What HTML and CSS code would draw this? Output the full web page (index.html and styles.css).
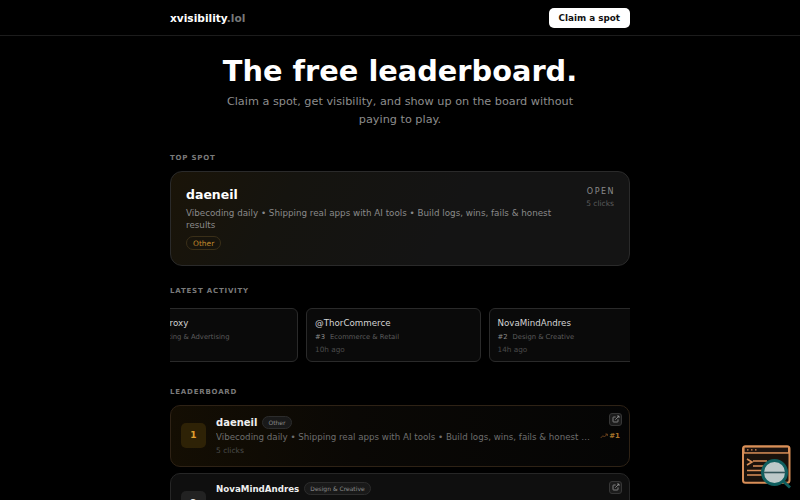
FILE: index.html
```html
<!DOCTYPE html>
<html lang="en">
<head>
    <meta charset="UTF-8">
    <meta name="viewport" content="width=device-width, initial-scale=1.0">
    <title>xvisibility.lol</title>
    <link rel="stylesheet" href="styles.css">
</head>
<body>
    <header class="topbar">
        <div class="wrap topbar-inner">
            <a class="logo" href="#">xvisibility<span class="logo-tld">.lol</span></a>
            <a class="claim-btn" href="#">Claim a spot</a>
        </div>
    </header>

    <main class="wrap">
        <section class="hero">
            <h1>The free leaderboard.</h1>
            <p>Claim a spot, get visibility, and show up on the board without paying to play.</p>
        </section>

        <section class="top-spot">
            <h2 class="section-label">Top spot</h2>
            <div class="spot-card">
                <div class="spot-main">
                    <div class="spot-name">daeneil</div>
                    <p class="spot-desc">Vibecoding daily • Shipping real apps with AI tools • Build logs, wins, fails &amp; honest results</p>
                    <span class="spot-tag">Other</span>
                </div>
                <div class="spot-side">
                    <div class="spot-open">OPEN</div>
                    <div class="spot-clicks">5 clicks</div>
                </div>
            </div>
        </section>

        <section class="activity">
            <h2 class="section-label">Latest activity</h2>
            <div class="ticker">
                <div class="ticker-track">
                    <div class="ticker-card">
                        <div class="ticker-name">TheAdsProxy</div>
                        <div class="ticker-meta"><b>#4</b><span>Marketing &amp; Advertising</span></div>
                        <div class="ticker-time">8h ago</div>
                    </div>
                    <div class="ticker-card">
                        <div class="ticker-name">@ThorCommerce</div>
                        <div class="ticker-meta"><b>#3</b><span>Ecommerce &amp; Retail</span></div>
                        <div class="ticker-time">10h ago</div>
                    </div>
                    <div class="ticker-card">
                        <div class="ticker-name">NovaMindAndres</div>
                        <div class="ticker-meta"><b>#2</b><span>Design &amp; Creative</span></div>
                        <div class="ticker-time">14h ago</div>
                    </div>
                </div>
            </div>
        </section>

        <section class="board">
            <h2 class="section-label">Leaderboard</h2>
            <div class="board-list">
                <div class="board-row board-row-first">
                    <div class="rank rank-first">1</div>
                    <div class="row-main">
                        <div class="row-head">
                            <span class="row-name">daeneil</span>
                            <span class="row-tag">Other</span>
                        </div>
                        <div class="row-desc">Vibecoding daily • Shipping real apps with AI tools • Build logs, wins, fails &amp; honest results</div>
                        <div class="row-clicks">5 clicks</div>
                    </div>
                    <div class="row-side">
                        <a class="ext-btn" href="#">
                            <svg viewBox="0 0 24 24"><path d="M18 13v6a2 2 0 0 1-2 2H5a2 2 0 0 1-2-2V8a2 2 0 0 1 2-2h6M15 3h6v6M10 14 21 3"/></svg>
                        </a>
                        <div class="row-pos">
                            <svg viewBox="0 0 24 24" width="8" height="8"><path d="M2 18l7-7 4 4 9-9M16 6h6v6"/></svg>
                            <span>#1</span>
                        </div>
                    </div>
                </div>
                <div class="board-row">
                    <div class="rank">2</div>
                    <div class="row-main row-main-tight">
                        <div class="row-head">
                            <span class="row-name">NovaMindAndres</span>
                            <span class="row-tag">Design &amp; Creative</span>
                        </div>
                        <div class="row-desc">Building AI products and sharing the design process in public every week</div>
                        <div class="row-clicks">3 clicks</div>
                    </div>
                    <div class="row-side">
                        <a class="ext-btn" href="#">
                            <svg viewBox="0 0 24 24"><path d="M18 13v6a2 2 0 0 1-2 2H5a2 2 0 0 1-2-2V8a2 2 0 0 1 2-2h6M15 3h6v6M10 14 21 3"/></svg>
                        </a>
                    </div>
                </div>
            </div>
        </section>
    </main>

    <!-- floating widget, stays in the corner -->
    <a class="float-widget" href="#">
        <svg viewBox="0 0 50 44" width="50" height="44">
            <rect x="2" y="1.2" width="46.5" height="36.5" rx="2.5" fill="#1a120c" stroke="#d98f58" stroke-width="2"/>
            <rect x="2" y="1.2" width="46.5" height="7.5" fill="#d98f58"/>
            <rect x="3.6" y="2.6" width="43.4" height="4.6" fill="#1b1310"/>
            <path d="M6 4.9h1.5M10 4.9h1.5M14 4.9h1.5" stroke="#d98f58" stroke-width="1.4"/>
            <path d="M6 14l5 3-5 3" fill="none" stroke="#d98f58" stroke-width="1.6"/>
            <path d="M12 16h14M12 21h12M6 25.5h20M6 30h18" stroke="#d98f58" stroke-width="1.6"/>
            <circle cx="33.5" cy="27.5" r="12" fill="#bdc9c9" stroke="#0f5f5f" stroke-width="3"/>
            <path d="M22.5 27.5h22" stroke="#35565a" stroke-width="1.6"/>
            <path d="M42 36l7 6.5" stroke="#0f5f5f" stroke-width="3"/>
        </svg>
    </a>
</body>
</html>
```

FILE: styles.css
```css
* {
    box-sizing: border-box;
}

html, body {
    height: 100%;
    overflow: hidden;
}

body {
    background-color: #000;
    color: #fff;
    font-family: "DejaVu Sans", sans-serif;
    margin: 0;
}

a {
    text-decoration: none;
    color: inherit;
}

.wrap {
    width: 460px;
    margin: 0 auto;
}

/* top bar */
.topbar {
    height: 36px;
    border-bottom: 1px solid #1c1c1c;
}

.topbar-inner {
    height: 35px;
    display: flex;
    justify-content: space-between;
    align-items: center;
}

.logo {
    font-size: 10.6px;
    font-weight: 700;
}

.logo-tld {
    color: #777;
}

.claim-btn {
    background-color: #fff;
    color: #111;
    font-size: 8.8px;
    font-weight: 700;
    padding: 0 10px;
    height: 20px;
    line-height: 20px;
    border-radius: 5px;
}

/* hero */
.hero {
    text-align: center;
    padding-top: 16px;
}

.hero h1 {
    font-size: 28.8px;
    line-height: 38px;
    margin: 0;
}

.hero p {
    width: 360px;
    margin: 3px auto 0;
    font-size: 11.25px;
    line-height: 18px;
    color: #8d8d8d;
}

.section-label {
    font-size: 7px;
    font-weight: 700;
    letter-spacing: 0.8px;
    line-height: 12px;
    color: #7a7a7a;
    text-transform: uppercase;
    margin: 0 0 7px;
}

/* top spot */
.top-spot {
    margin-top: 23px;
}

.spot-card {
    display: flex;
    justify-content: space-between;
    height: 95px;
    padding: 14px 15px 0;
    border: 1px solid #2a2a2a;
    border-radius: 12px;
    background: linear-gradient(120deg, #1a1408 0%, #15140f 25%, #141414 60%);
}

.spot-main {
    width: 370px;
}

.spot-name {
    font-size: 12.5px;
    font-weight: 700;
    line-height: 18px;
}

.spot-desc {
    font-size: 8.75px;
    line-height: 12px;
    color: #8a8a8a;
    margin: 3px 0 0;
}

.spot-tag {
    display: inline-block;
    margin-top: 5px;
    padding: 0 6px;
    height: 14px;
    line-height: 13px;
    font-size: 7.5px;
    color: #c08a2c;
    border: 1px solid #3a2f18;
    border-radius: 7px;
}

.spot-side {
    text-align: right;
}

.spot-open {
    font-size: 8px;
    letter-spacing: 1.5px;
    line-height: 12px;
    color: #8a8a8a;
    margin-right: -1px;
}

.spot-clicks {
    font-size: 7.5px;
    line-height: 10px;
    margin-top: 1px;
    color: #5c5c5c;
}

/* latest activity */
.activity {
    margin-top: 19px;
}

.activity .section-label {
    margin-bottom: 11px;
}

.ticker {
    overflow: hidden;
}

.ticker-track {
    display: flex;
    gap: 8px;
    margin-left: -46.5px;
}

.ticker-card {
    flex: 0 0 174.5px;
    height: 54px;
    padding: 7.5px 8px 7px;
    border: 1px solid #2a2a2a;
    border-radius: 6px;
    background-color: #0a0a0a;
}

.ticker-name {
    font-size: 8.7px;
    line-height: 13px;
    color: #d4d4d4;
}

.ticker-meta {
    display: flex;
    gap: 5px;
    font-size: 6.8px;
    line-height: 11px;
    margin-top: 2px;
    color: #5c5c5c;
}

.ticker-meta b {
    color: #8a8a8a;
    font-weight: 400;
}

.ticker-time {
    font-size: 7.3px;
    line-height: 11px;
    margin-top: 1.5px;
    color: #4a4a4a;
}

/* leaderboard */
.board {
    margin-top: 23.5px;
}

.board-list {
    display: flex;
    flex-direction: column;
    gap: 6px;
}

.board-row {
    display: flex;
    align-items: center;
    gap: 10px;
    height: 62px;
    padding: 0 7px 0 10px;
    border: 1px solid #262626;
    border-radius: 10px;
    background-color: #0f0f0f;
}

.board-row-first {
    border-color: #2e2215;
    background: linear-gradient(90deg, #140e03 0%, #0a0805 40%, #050505 100%);
}

.rank {
    flex: none;
    width: 25px;
    height: 25px;
    line-height: 25px;
    text-align: center;
    font-size: 9px;
    font-weight: 700;
    color: #ddd;
    background-color: #222;
    border-radius: 5px;
}

.rank-first {
    color: #e0a030;
    background-color: #2e2206;
}

.row-main {
    flex: 1;
    min-width: 0;
}

.row-main-tight {
    margin-bottom: 3px;
}

.row-head {
    display: flex;
    align-items: center;
    gap: 5px;
    height: 14px;
}

.row-name {
    font-size: 8.7px;
    font-weight: 700;
    color: #eee;
}

.board-row-first .row-name {
    font-size: 10px;
}

.row-tag {
    padding: 0 5px;
    height: 13px;
    line-height: 12px;
    font-size: 6px;
    color: #8a8a8a;
    background-color: #191919;
    border: 1px solid #2c2c2c;
    border-radius: 7px;
}

.row-desc {
    font-size: 8.7px;
    line-height: 12px;
    margin-top: 2px;
    color: #6e6e6e;
    white-space: nowrap;
    overflow: hidden;
    text-overflow: ellipsis;
}

.row-clicks {
    font-size: 7.5px;
    line-height: 11px;
    margin-top: 2px;
    color: #4c4c4c;
}

.row-side {
    flex: none;
    align-self: stretch;
    width: 20px;
    display: flex;
    flex-direction: column;
    align-items: flex-end;
    padding-top: 7px;
    gap: 6px;
}

.ext-btn {
    width: 13px;
    height: 13px;
    display: flex;
    align-items: center;
    justify-content: center;
    background-color: #1c1c1c;
    border: 1px solid #363636;
    border-radius: 3px;
}

.ext-btn svg {
    width: 8px;
    height: 8px;
    fill: none;
    stroke: #999;
    stroke-width: 2.4;
}

.row-pos {
    display: flex;
    align-items: center;
    gap: 1px;
    padding-right: 2px;
    font-size: 7px;
    font-weight: 700;
    white-space: nowrap;
    color: #a8742a;
}

.row-pos svg {
    fill: none;
    stroke: #7a4a20;
    stroke-width: 2.5;
}

/* floating widget */
.float-widget {
    position: fixed;
    right: 9px;
    bottom: 11px;
    line-height: 0;
}
```
